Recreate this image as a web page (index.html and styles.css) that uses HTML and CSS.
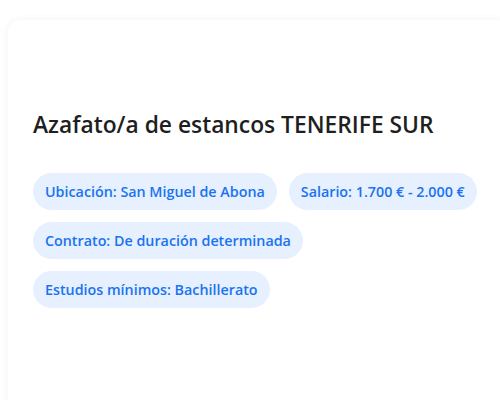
FILE: index.html
```html
<!DOCTYPE html>
<html lang="es">
<head>
<meta charset="utf-8">
<link rel="stylesheet" href="styles.css">
</head>
<body>
<div class="card">
  <h1 class="title">Azafato/a de estancos TENERIFE SUR</h1>
  <div class="tags">
    <span class="tag">Ubicación: San Miguel de Abona</span>
    <span class="tag">Salario: 1.700 € - 2.000 €</span>
    <span class="tag">Contrato: De duración determinada</span>
    <span class="tag">Estudios mínimos: Bachillerato</span>
  </div>
</div>
</body>
</html>
```
FILE: styles.css
```css
html, body {
  overflow: hidden;
}
body {
  margin: 0;
  padding: 20px 0 0 8px;
  background: #ffffff;
  font-family: "Open Sans", "Noto Sans", sans-serif;
}
.card {
  width: 500px;
  height: 420px;
  box-sizing: border-box;
  padding: 89px 0 0 25px;
  background: #ffffff;
  border-radius: 12px;
  box-shadow: 0 0 8px rgba(0, 0, 0, 0.06);
}
.title {
  margin: 0 0 32px;
  font-size: 22.8px;
  font-weight: 600;
  line-height: 32px;
  color: #1f1f1f;
}
.tags {
  display: flex;
  flex-wrap: wrap;
  gap: 12px;
  width: 460px;
}
.tag {
  display: block;
  padding: 8px 12px;
  font-size: 14.3px;
  line-height: 21px;
  font-weight: 600;
  color: #1a73f0;
  background: #e6f0ff;
  border-radius: 999px;
}
```
